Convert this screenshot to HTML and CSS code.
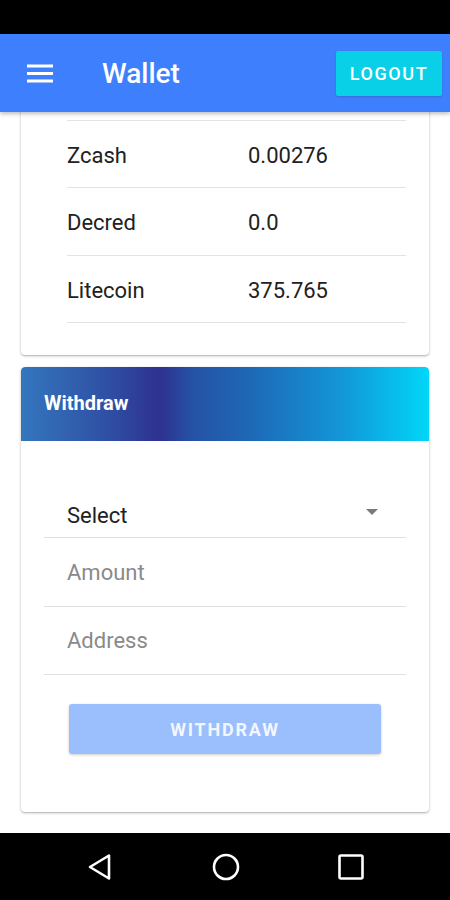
FILE: index.html
```html
<!DOCTYPE html>
<html>
	<head>
		<meta charset="utf-8">
		<title>Wallet</title>
		<link rel="stylesheet" href="styles.css">
	</head>
	<body>
		<div class="statusbar"></div>
		<div class="appbar">
			<button class="menu" aria-label="menu">
				<svg width="26" height="20" viewBox="0 0 26 20"><path d="M0 2h26M0 9.5h26M0 17h26" stroke="#fff" stroke-width="3"/></svg>
			</button>
			<h1 class="title">Wallet</h1>
			<button class="logout">LOGOUT</button>
		</div>
		<div class="content">
			<div class="card balances">
				<ul class="coins">
					<li><span class="name">Zcash</span><span class="amount">0.00276</span></li>
					<li><span class="name">Decred</span><span class="amount">0.0</span></li>
					<li><span class="name">Litecoin</span><span class="amount">375.765</span></li>
				</ul>
			</div>
			<div class="card withdraw">
				<div class="card-head">Withdraw</div>
				<div class="form">
					<div class="field select"><span>Select</span><i class="caret"></i></div>
					<div class="field placeholder">Amount</div>
					<div class="field placeholder">Address</div>
					<button class="submit">WITHDRAW</button>
				</div>
			</div>
		</div>
		<div class="navbar">
			<svg width="26" height="28" viewBox="0 0 26 28"><path d="M22 2.5v23L3 14z" fill="none" stroke="#fff" stroke-width="2.6" stroke-linejoin="round"/></svg>
			<svg width="28" height="28" viewBox="0 0 28 28"><circle cx="14" cy="14" r="12" fill="none" stroke="#fff" stroke-width="2.6"/></svg>
			<svg width="26" height="26" viewBox="0 0 26 26"><rect x="1.5" y="1.5" width="23" height="23" rx="1.5" fill="none" stroke="#fff" stroke-width="2.6"/></svg>
		</div>
	</body>
</html>
```

FILE: styles.css
```css
* {
	box-sizing: border-box;
}

body {
	margin: 0;
	width: 450px;
	height: 900px;
	overflow: hidden;
	background: #fff;
	font-family: Roboto, "Liberation Sans", sans-serif;
	color: #212121;
	display: flex;
	flex-direction: column;
}

.statusbar {
	height: 34px;
	background: #000;
	flex: none;
}

.appbar {
	height: 78px;
	flex: none;
	background: #3e7ffd;
	display: flex;
	align-items: center;
	padding: 0 8px 0 27px;
	position: relative;
	z-index: 2;
	box-shadow: 0 2px 4px rgba(0, 0, 0, 0.25);
}

.menu {
	background: none;
	border: 0;
	padding: 0;
	width: 26px;
	height: 20px;
	margin-top: 1px;
}

.menu svg {
	display: block;
}

.title {
	margin: 0 0 0 49px;
	font-size: 28px;
	font-weight: 500;
	color: #fff;
	flex: 1;
}

.logout {
	background: #09d0e6;
	color: #fff;
	border: 0;
	border-radius: 2px;
	width: 106px;
	height: 45px;
	font-family: inherit;
	font-size: 18px;
	font-weight: 500;
	letter-spacing: 1.6px;
	padding: 0;
	box-shadow: 0 1px 2px rgba(0, 0, 0, 0.15);
}

.content {
	flex: 1;
	overflow: hidden;
	padding: 0 21px;
}

.card {
	background: #fff;
	border-radius: 4px;
	box-shadow: 0 1px 3px rgba(0, 0, 0, 0.25), 0 1px 1px rgba(0, 0, 0, 0.1);
}

.balances {
	margin-top: -8px;
	padding: 16px 23px 32px 46px;
}

.coins {
	list-style: none;
	margin: 0;
	padding: 0;
	border-top: 1px solid #e3e3e3;
}

.coins li {
	height: 67px;
	border-bottom: 1px solid #e3e3e3;
	display: flex;
	align-items: center;
	font-size: 22px;
	padding-top: 2px;
}

.coins li:nth-child(2) {
	height: 68px;
}

.coins .name {
	width: 181px;
}

.withdraw {
	margin-top: 12px;
	overflow: hidden;
}

.card-head {
	height: 74px;
	display: flex;
	align-items: center;
	padding: 0 23px 2px;
	color: #fff;
	font-size: 20px;
	font-weight: 700;
	background: linear-gradient(90deg, #3476bd 0%, #2f4ea3 22%, #2e3190 34%, #2552a5 42%, #1e68b6 56%, #1395d6 78%, #00d6f8 100%);
	border-top-left-radius: 4px;
	border-top-right-radius: 4px;
}

.form {
	padding: 51px 23px 58px;
}

.field {
	border-bottom: 1px solid #e0e0e0;
	padding: 0 23px;
	display: flex;
	align-items: center;
	font-size: 22px;
}

.select {
	height: 46px;
	justify-content: space-between;
	padding-right: 28px;
	padding-top: 2px;
}

.caret {
	width: 0;
	height: 0;
	border-left: 6px solid transparent;
	border-right: 6px solid transparent;
	border-top: 6px solid #7a7a7a;
	margin-bottom: 8px;
}

.placeholder {
	height: 69px;
	color: #8a8a8a;
}

.placeholder + .placeholder {
	height: 68px;
}

.submit {
	display: block;
	margin: 29px 25px 0;
	width: calc(100% - 50px);
	height: 50px;
	border: 0;
	border-radius: 3px;
	background: #9bbefc;
	color: #f2f6ff;
	font-family: inherit;
	font-size: 18px;
	font-weight: 700;
	letter-spacing: 1.8px;
	box-shadow: 0 1px 3px rgba(0, 0, 0, 0.2);
}

.navbar {
	height: 67px;
	flex: none;
	background: #000;
	display: flex;
	align-items: center;
	justify-content: space-between;
	padding: 0 86px 0 87px;
}
```
